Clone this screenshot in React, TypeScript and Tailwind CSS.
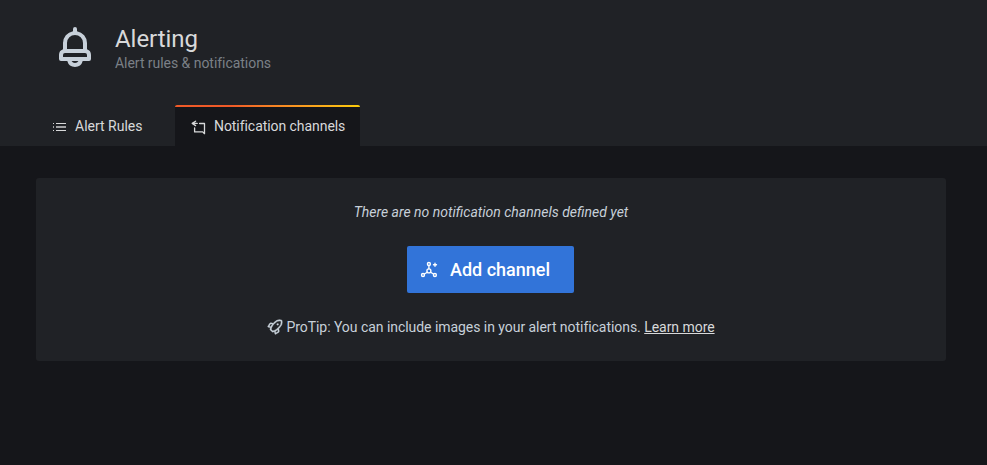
import React from 'react';

function BellIcon() {
  return (
    <svg viewBox="0 0 24 24" className="size-12 shrink-0 fill-[#c7d0d9]">
      <path d="M18,13.18V10a6,6,0,0,0-5-5.91V3a1,1,0,0,0-2,0V4.09A6,6,0,0,0,6,10v3.18A3,3,0,0,0,4,16v2a1,1,0,0,0,1,1H8.14a4,4,0,0,0,7.72,0H19a1,1,0,0,0,1-1V16A3,3,0,0,0,18,13.18ZM8,10a4,4,0,0,1,8,0v3H8Zm4,10a2,2,0,0,1-1.72-1h3.44A2,2,0,0,1,12,20Zm6-3H6V16a1,1,0,0,1,1-1H17a1,1,0,0,1,1,1Z" />
    </svg>
  );
}

function ListIcon() {
  return (
    <svg viewBox="0 0 16 16" className="size-4 shrink-0 fill-[#d8d9da]">
      <path d="M2 4h1v1H2zM5 4h10v1H5zM2 11h1v1H2zM5 11h10v1H5z" />
      <path opacity="0.7" d="M2 7h1v2H2zM5 7h10v2H5z" />
    </svg>
  );
}

function CommentShareIcon() {
  return (
    <svg viewBox="0 0 16 16" fill="none" strokeWidth="1.3" strokeLinecap="round" strokeLinejoin="round" className="size-4 shrink-0 stroke-[#d8d9da]">
      <path d="M4.6 2.2 1.2 4.4l3.4 2.2M1.7 4.4h4.5" />
      <path d="M8.6 4.5h4.9v10.2l-1.8-1.8H3.6V9" />
    </svg>
  );
}

function ChannelAddIcon() {
  return (
    <svg viewBox="0 0 18 18" fill="none" strokeWidth="1.35" strokeLinecap="round" className="size-[18px] shrink-0 stroke-white">
      <circle cx="8.9" cy="3" r="1.5" />
      <circle cx="8.9" cy="9.9" r="2" />
      <circle cx="3" cy="14" r="1.5" />
      <circle cx="14.9" cy="14" r="1.5" />
      <path d="M8.9 4.7v3M7.2 11.2l-2.8 1.8M10.6 11.2l2.8 1.8M15 2.2v3M13.5 3.7h3" />
    </svg>
  );
}

function RocketIcon() {
  return (
    <svg viewBox="0 0 24 24" strokeWidth="0.4" className="size-4 shrink-0 fill-[#c7d0d9] stroke-[#c7d0d9]">
      <path fillRule="evenodd" d="M22.601,2.062a1,1,0,0,0-.713-.713A11.252,11.252,0,0,0,10.47,4.972L9.354,6.296,6.75,5.668a2.777,2.777,0,0,0-3.387,1.357l-2.2,3.9a1,1,0,0,0,.661,1.469l3.074.659a13.918,13.918,0,0,0-.556,2.464,1,1,0,0,0,.286.831l3.1,3.1a.999.999,0,0,0,.708.293c.028,0,.057-.001.086-.004a12.169,12.169,0,0,0,2.492-.49l.644,3.004a1,1,0,0,0,1.469.661l3.905-2.202a3.035,3.035,0,0,0,1.375-3.304l-.668-2.76,1.237-1.137A11.204,11.204,0,0,0,22.601,2.062ZM3.572,10.723l1.556-2.748a.826.826,0,0,1,1.07-.375l1.718.416-.65.772a13.095,13.095,0,0,0-1.59,2.398Zm12.47,8.222-2.715,1.532-.43-2.005a11.34,11.34,0,0,0,2.414-1.62l.743-.683.404,1.664A1.041,1.041,0,0,1,16.042,18.945ZM17.893,11.668l-3.961,3.64a9.8,9.8,0,0,1-5.26,2.197L6.553,15.386a10.942,10.942,0,0,1,2.142-5.306L10.092,8.43c.016-.019.022-.042.036-.06l1.87-2.11a9.261,9.261,0,0,1,8.872-3.034A9.205,9.205,0,0,1,17.893,11.668Z" />
      <circle cx="16" cy="8" r="1.4" />
    </svg>
  );
}

export default function App() {
  return (
    <div className="h-[465px] w-[987px] overflow-hidden bg-[#15161a] font-[Roboto,sans-serif] text-sm text-[#c7d0d9]">
      <header className="flex h-[146px] flex-col justify-between bg-[#202226]">
        <div className="flex gap-4 pt-[23px] pl-[51px]">
          <BellIcon />
          <div>
            <h1 className="pt-px text-2xl leading-[31px] tracking-[-0.05px] text-[#d8d9da]">Alerting</h1>
            <p className="leading-[17px] tracking-[-0.04px] text-[#7b8087]">Alert rules &amp; notifications</p>
          </div>
        </div>
        <nav className="flex h-[41px] pl-9 text-[#d8d9da]">
          <a className="flex w-[139px] items-center gap-2 pt-0.5 pl-[15px]">
            <ListIcon />
            <span className="pb-0.5">Alert Rules</span>
          </a>
          <a className="flex w-[185px] flex-col overflow-hidden rounded-t-[2px] bg-[#15161a]">
            <span className="h-0.5 bg-linear-to-r from-[#f05a28] from-30% to-[#fbca0a] to-99%" />
            <span className="flex flex-1 items-center gap-[7px] pl-4">
              <CommentShareIcon />
              <span className="pb-0.5 tracking-[-0.06px]">Notification channels</span>
            </span>
          </a>
        </nav>
      </header>
      <main className="px-9 pt-8">
        <section className="flex h-[183px] w-[910px] flex-col items-center rounded-[3px] bg-[#202226] pt-6">
          <p className="leading-5 italic">There are no notification channels defined yet</p>
          <button className="mt-6 mr-px flex h-[47px] w-[167px] items-center gap-3 rounded-[2px] bg-[#3274d9] pl-[13px] text-lg font-medium text-white">
            <ChannelAddIcon />
            Add channel
          </button>
          <p className="mt-6 flex items-center gap-[3px] leading-5">
            <RocketIcon />
            <span className="tracking-[-0.045px]">
              ProTip: You can include images in your alert notifications.{' '}
              <a className="text-[#d8d9da] underline">Learn more</a>
            </span>
          </p>
        </section>
      </main>
    </div>
  );
}
